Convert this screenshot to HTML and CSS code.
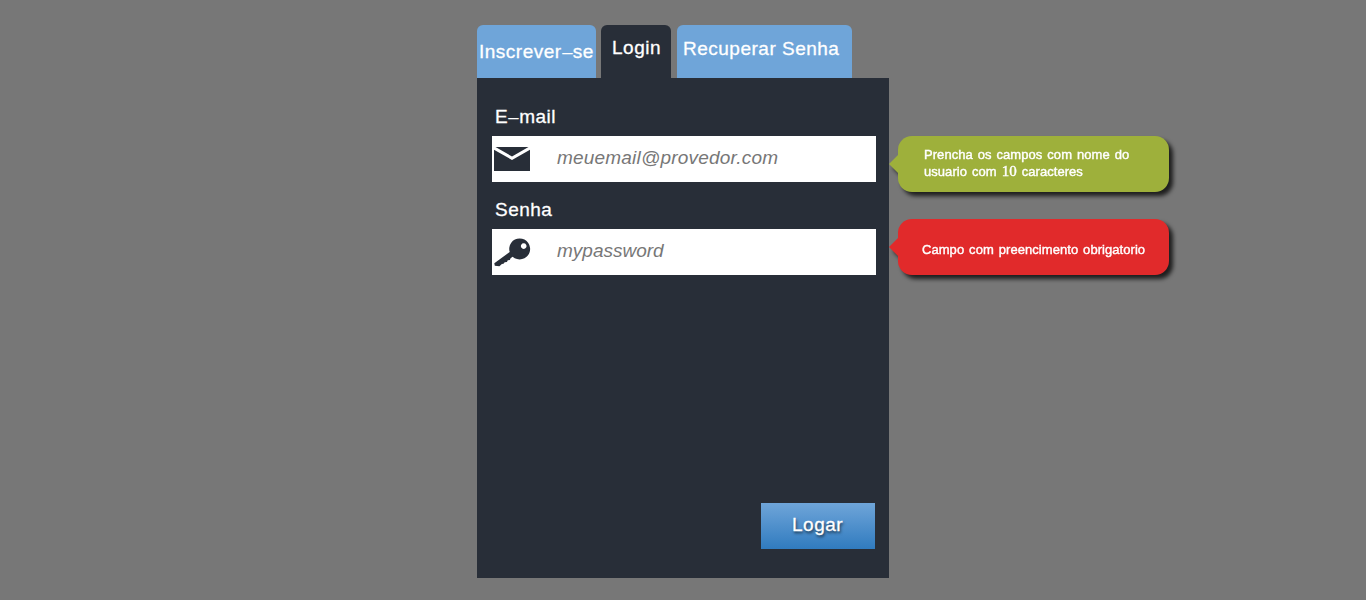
FILE: index.html
```html
<!DOCTYPE html>
<html lang="pt-BR">
<head>
<meta charset="utf-8">
<title>Login</title>
<link rel="stylesheet" href="styles.css">
</head>
<body>
<main class="page">
  <section class="login">
    <nav class="tabs">
      <a class="tab tab-signup">Inscrever<span class="dash">-</span>se</a>
      <a class="tab tab-login">Login</a>
      <a class="tab tab-recover">Recuperar Senha</a>
    </nav>
    <form class="panel">
      <label class="label">E<span class="dash">-</span>mail</label>
      <div class="field">
        <svg class="icon" width="36" height="24" viewBox="0 0 36 24"><path d="M1.500 0h33L18 9.500zM0 2.800l18 10.200L36 2.800V24H0z"/></svg>
        <span class="placeholder">meuemail@provedor.com</span>
      </div>
      <label class="label">Senha</label>
      <div class="field">
        <svg class="icon icon-key" width="37" height="29" viewBox="0 0 37 29"><path fill-rule="evenodd" d="M25.600 0.400a10.500 10.500 0 1 1-7 18.300l-2 1.600-.8 1.800-2 .1-.9 1.800-2.200.2-1.200 1.500-1.600.3-2.500 2.200-4.600-.5-.5-2.400L15.700 14a10.500 10.500 0 0 1 9.900-13.600zM29.700 5.300a2.800 2.800 0 1 0 .01 0z"/></svg>
        <span class="placeholder placeholder-password">mypassword</span>
      </div>
      <div class="submit">Logar</div>
    </form>
  </section>
  <aside class="tips">
    <div class="tip tip-green">
      <p class="tip-text">Prencha os campos com nome do<br>usuario com <span class="num">10</span> caracteres</p>
    </div>
    <div class="tip tip-red">
      <p class="tip-text">Campo com preencimento obrigatorio</p>
    </div>
  </aside>
</main>
</body>
</html>
```
FILE: styles.css
```css
* { box-sizing: border-box; }
body {
  margin: 0;
  height: 600px;
  overflow: hidden;
  background: #777;
  color: #fff;
  font-family: "Liberation Sans", Arial, sans-serif;
  font-size: 19px;
  letter-spacing: 0.5px;
}
.page { display: flex; align-items: flex-start; padding: 25px 0 0 477px; }
.login { width: 412px; }
.tabs { display: flex; height: 53px; }
.tab {
  height: 53px;
  border-radius: 6px 6px 0 0;
  background: #6fa5d9;
  line-height: 20px;
  white-space: nowrap;
  -webkit-text-stroke: 0.3px;
}
.tab-signup { width: 119px; padding: 17px 0 0 2px; }
.tab-login { width: 70px; margin-left: 5px; padding: 13px 0 0 11px; background: #282e38; }
.tab-recover { width: 175px; margin-left: 6px; padding: 14px 0 0 6px; }
.dash {
  display: inline-block;
  width: 11px;
  text-align: center;
  transform: scale(2.1, 0.7) translateY(1px);
  letter-spacing: 0;
}
.panel { display: flex; flex-direction: column; height: 500px; padding: 29px 13px 29px 15px; background: #282e38; }
.label { height: 20px; padding-left: 3px; line-height: 20px; -webkit-text-stroke: 0.3px; }
.field {
  display: flex;
  height: 46px;
  margin: 9px 0 18px;
  padding-left: 2px;
  background: #fff;
}
.icon { flex: none; margin: 11px 27px 0 0; fill: #282e38; }
.icon-key { margin: 9px 26px 0 0; }
.placeholder { padding-top: 12px; color: #777; font-style: italic; line-height: 20px; letter-spacing: 0.2px; }
.placeholder-password { letter-spacing: 0; }
.submit {
  align-self: flex-end;
  width: 114px;
  height: 46px;
  margin: auto 1px 0 0;
  padding-left: 31px;
  background: linear-gradient(#6fa5d9, #307bbf);
  line-height: 43px;
  text-shadow: 1px 2px 3px rgba(0, 0, 0, 0.7);
  -webkit-text-stroke: 0.3px;
}
.tips { padding: 111px 0 0 9px; }
.tip {
  position: relative;
  width: 271px;
  height: 56px;
  margin-bottom: 27px;
  border-radius: 14px;
  filter: drop-shadow(4px 4px 2px rgba(0, 0, 0, 0.75));
}
.tip::before {
  content: "";
  position: absolute;
  left: -9px;
  top: 19px;
  border: 9px solid transparent;
  border-left: 0;
}
.tip-green { padding: 10px 0 0 26px; background: #9eb03b; }
.tip-green::before { border-right-color: #9eb03b; }
.tip-red { padding: 22px 0 0 24px; background: #e12a2b; }
.tip-red::before { border-right-color: #e12a2b; }
.tip-text {
  margin: 0;
  font-size: 13px;
  line-height: 17px;
  letter-spacing: 0.05px;
  word-spacing: 1.300px;
  white-space: nowrap;
  -webkit-text-stroke: 0.4px;
}
.num { font-family: "Liberation Serif", serif; font-size: 15px; line-height: 1; }
```
